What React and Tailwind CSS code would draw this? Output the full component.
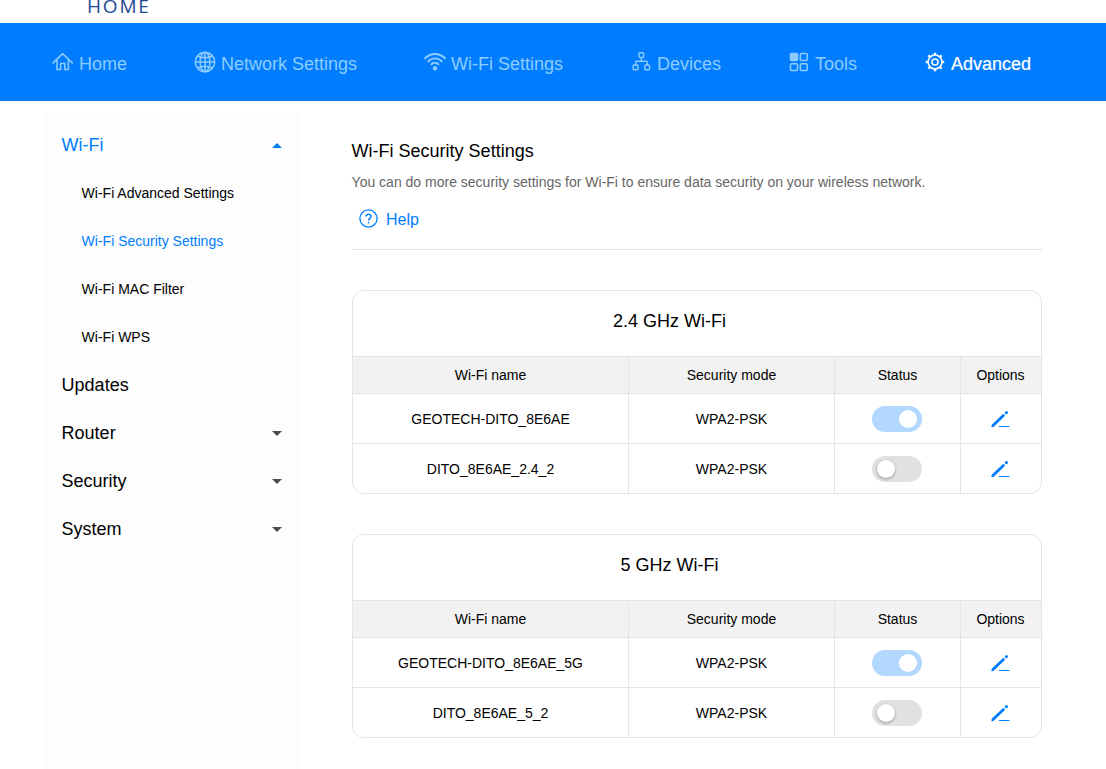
import React from 'react';

const HomeIcon = () => (
  <svg width="22" height="20" viewBox="0 0 22 20" fill="none" stroke="currentColor" strokeWidth="1.5">
    <path d="M0.6 11.4 L10.6 1.6 L20.8 11.4" />
    <path d="M5 8 V17.6 H8.6 V11.6 H12.8 V17.6 H16.4 V8" />
  </svg>
);

const GlobeIcon = () => (
  <svg width="22" height="22" viewBox="0 0 22 22" fill="none" stroke="currentColor" strokeWidth="1.5">
    <circle cx="11" cy="11" r="9.7" />
    <ellipse cx="11" cy="11" rx="4.9" ry="9.7" />
    <path d="M1.3 11 H20.7 M11 1.3 V20.7 M3.5 5 Q11 8.6 18.5 5 M3.5 17 Q11 13.4 18.5 17" />
  </svg>
);

const WifiIcon = () => (
  <svg width="22" height="18" viewBox="0 0 22 18" fill="none" stroke="currentColor" strokeWidth="1.8">
    <path d="M0.6 5.8 C6.5 -0.6 15.5 -0.6 21.4 5.8" />
    <path d="M3.8 8.9 C8 4.3 14 4.3 18.2 8.9" />
    <path d="M6.8 11.9 C9.3 9 12.7 9 15.2 11.9" />
    <circle cx="11" cy="15.3" r="2.2" fill="currentColor" stroke="none" />
  </svg>
);

const DevicesIcon = () => (
  <svg width="19" height="19" viewBox="0 0 19 19" fill="none" stroke="currentColor" strokeWidth="1.4">
    <rect x="7" y="0.8" width="4.6" height="4.6" rx="1" />
    <rect x="1.2" y="13" width="4.8" height="4.8" rx="1" />
    <rect x="12.8" y="13" width="4.8" height="4.8" rx="1" />
    <path d="M9.4 5.4 V9.2 M3.6 13 V10.2 Q3.6 9.2 4.6 9.2 H14.2 Q15.2 9.2 15.2 10.2 V13" />
  </svg>
);

const ToolsIcon = () => (
  <svg width="20" height="20" viewBox="0 0 20 20" fill="none" stroke="currentColor" strokeWidth="1.5">
    <rect x="1.5" y="1.5" width="7" height="7" rx="1" fill="currentColor" />
    <rect x="11.3" y="1.5" width="7" height="7" rx="1.2" />
    <rect x="1.5" y="11.8" width="7" height="6.6" rx="1.2" />
    <rect x="11.3" y="11.8" width="7" height="6.6" rx="1.2" />
  </svg>
);

const GearIcon = () => (
  <svg width="20" height="20" viewBox="0 0 20 20" fill="none" stroke="currentColor" strokeWidth="1.5">
    <circle cx="10" cy="10" r="6.9" />
    <circle cx="10" cy="10" r="3" />
    <path
      d="M10 0.8 V3 M10 17 V19.2 M0.8 10 H3 M17 10 H19.2 M3.4 3.4 L5 5 M15 15 L16.6 16.6 M3.4 16.6 L5 15 M15 5 L16.6 3.4"
      strokeWidth="2.4"
    />
  </svg>
);

const EditIcon = () => (
  <svg width="20" height="20" viewBox="0 0 20 20" fill="none" stroke="#007dff" strokeLinecap="round">
    <path d="M3 16.4 L13.4 6.4" strokeWidth="2.8" />
    <path d="M1.6 17.9 L2.4 16 L3.6 17.2 Z" fill="#007dff" strokeWidth="0.4" />
    <path d="M16.3 3.7 L16.5 3.5" strokeWidth="3" />
    <path d="M9.4 17.5 H19" strokeWidth="1.2" />
  </svg>
);

const navItems = [
  { label: 'Home', icon: HomeIcon, width: 'w-[142px]', gap: 'gap-[5px]' },
  { label: 'Network Settings', icon: GlobeIcon, width: 'w-[230px]', gap: 'gap-[5px]' },
  { label: 'Wi-Fi Settings', icon: WifiIcon, width: 'w-[208px]', gap: 'gap-[5px]' },
  { label: 'Devices', icon: DevicesIcon, width: 'w-[157px]', gap: 'gap-1.5' },
  { label: 'Tools', icon: ToolsIcon, width: 'w-[136px]', gap: 'gap-1.5' },
  { label: 'Advanced', icon: GearIcon, width: 'w-[120px]', gap: 'gap-1.5', active: true },
];

const wifiPages = [
  { label: 'Wi-Fi Advanced Settings' },
  { label: 'Wi-Fi Security Settings', active: true },
  { label: 'Wi-Fi MAC Filter' },
  { label: 'Wi-Fi WPS' },
];

const sections = [
  { label: 'Updates' },
  { label: 'Router', expandable: true },
  { label: 'Security', expandable: true },
  { label: 'System', expandable: true },
];

const bands = [
  {
    title: '2.4 GHz Wi-Fi',
    networks: [
      { name: 'GEOTECH-DITO_8E6AE', mode: 'WPA2-PSK', enabled: true },
      { name: 'DITO_8E6AE_2.4_2', mode: 'WPA2-PSK', enabled: false },
    ],
  },
  {
    title: '5 GHz Wi-Fi',
    networks: [
      { name: 'GEOTECH-DITO_8E6AE_5G', mode: 'WPA2-PSK', enabled: true },
      { name: 'DITO_8E6AE_5_2', mode: 'WPA2-PSK', enabled: false },
    ],
  },
];

const NavBar = () => (
  <nav className="flex h-[78px] items-center bg-[#007dff] pl-[52px] pb-px text-lg">
    {navItems.map(({ label, icon: Icon, width, gap, active }) => (
      <a
        key={label}
        className={`flex shrink-0 items-center whitespace-nowrap ${width} ${gap} ${
          active ? 'text-white [-webkit-text-stroke:0.2px_white]' : 'text-[#8dccff]'
        }`}
      >
        <span className="shrink-0">
          <Icon />
        </span>
        <span className="pt-1">{label}</span>
      </a>
    ))}
  </nav>
);

const Caret = ({ up }) => (
  <svg width="10" height="5" viewBox="0 0 10 5" fill="currentColor">
    <path d={up ? 'M0 5 L5 0 L10 5 Z' : 'M0 0 L5 5 L10 0 Z'} />
  </svg>
);

const Sidebar = () => (
  <aside className="ml-[43px] mt-[11px] w-[257px] shrink-0 bg-[#fdfdfd] pl-[18.6px] pr-[18px] pt-[9px]">
    <div className="flex h-12 items-center justify-between text-lg text-[#007dff]">
      Wi-Fi
      <Caret up />
    </div>
    {wifiPages.map((page) => (
      <div
        key={page.label}
        className={`flex h-12 items-center pl-5 text-sm ${page.active ? 'text-[#007dff]' : 'text-black'}`}
      >
        {page.label}
      </div>
    ))}
    {sections.map((section) => (
      <div key={section.label} className="flex h-12 items-center justify-between text-lg text-black">
        {section.label}
        {section.expandable && (
          <span className="flex text-[#4d4d4d]">
            <Caret />
          </span>
        )}
      </div>
    ))}
  </aside>
);

const Toggle = ({ enabled }) => (
  <div
    className={`flex h-[26px] w-[50px] items-center rounded-full px-[5px] ${
      enabled ? 'justify-end bg-[#b2d8ff]' : 'bg-[#e1e1e1]'
    }`}
  >
    <span className={`size-[18px] rounded-full bg-white ${enabled ? '' : 'shadow-[0_1px_3px_rgba(0,0,0,0.35)]'}`} />
  </div>
);

const BandCard = ({ band }) => (
  <section className="overflow-hidden rounded-xl border border-[#e5e5e5] text-sm">
    <h2 className="flex h-[65px] items-center justify-center pb-[5px] pr-[55px] text-lg">{band.title}</h2>
    <div className="grid h-[38px] grid-cols-[276px_206px_126px_80px] border-t border-b border-[#e5e5e5] bg-[#f2f2f2]">
      {['Wi-Fi name', 'Security mode', 'Status', 'Options'].map((heading) => (
        <div
          key={heading}
          className="flex items-center justify-center border-r border-[#e5e5e5] last:border-r-0 last:pr-px"
        >
          {heading}
        </div>
      ))}
    </div>
    {band.networks.map((network) => (
      <div
        key={network.name}
        className="grid h-[50px] grid-cols-[276px_206px_126px_80px] border-b border-[#e5e5e5] last:h-[49px] last:border-b-0 *:flex *:items-center *:justify-center *:border-r *:border-[#e5e5e5] *:last:border-r-0"
      >
        <div>{network.name}</div>
        <div>{network.mode}</div>
        <div className="pr-px">
          <Toggle enabled={network.enabled} />
        </div>
        <div className="pr-0.5">
          <EditIcon />
        </div>
      </div>
    ))}
  </section>
);

const App = () => {
  return (
    <div className="flex h-[769px] flex-col overflow-hidden bg-white font-['Liberation_Sans',Arial,sans-serif] text-black">
      <header className="flex h-[23px] shrink-0 items-end pb-1.5 pl-[87px]">
        <span className="font-['Open_Sans',sans-serif] text-[19px] leading-[22px] tracking-[1.8px] text-[#1f4a94]">HOME</span>
      </header>
      <NavBar />
      <div className="flex min-h-0 flex-1">
        <Sidebar />
        <main className="ml-[52px] w-[690px] pt-9">
          <h1 className="-ml-[0.4px] text-lg leading-7">Wi-Fi Security Settings</h1>
          <p className="-ml-[0.4px] mt-[7px] text-sm text-[#666]">
            You can do more security settings for Wi-Fi to ensure data security on your wireless network.
          </p>
          <div className="mt-4 flex items-center gap-2 pl-[7px] text-[#007dff]">
            <svg className="mb-[3px]" width="19" height="19" viewBox="0 0 19 19" fill="none" stroke="currentColor" strokeWidth="1.3">
              <circle cx="9.5" cy="9.5" r="8.6" />
              <path d="M7.1 7.6 C7.1 4.4 12 4.4 12 7.5 C12 9.3 9.6 9.4 9.6 11.5" strokeWidth="1.5" />
              <circle cx="9.6" cy="13.6" r="0.9" fill="currentColor" stroke="none" />
            </svg>
            <span>Help</span>
          </div>
          <hr className="mt-[17px] border-[#e5e5e5]" />
          <div className="mt-10 flex flex-col gap-10">
            {bands.map((band) => (
              <BandCard key={band.title} band={band} />
            ))}
          </div>
        </main>
      </div>
    </div>
  );
};

export default App;
